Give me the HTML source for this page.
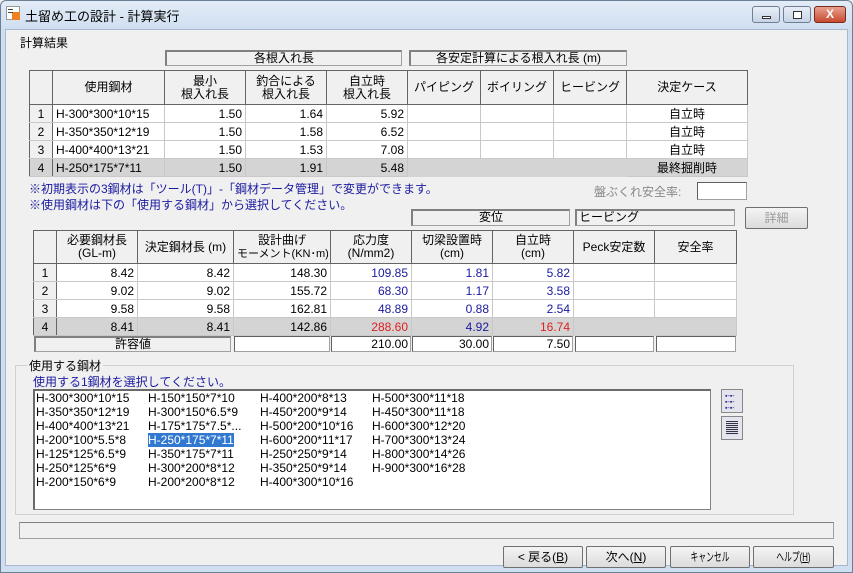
<!DOCTYPE html>
<html><head><meta charset="utf-8"><style>
*{box-sizing:border-box;margin:0;padding:0}
body{width:853px;height:573px;background:#f0f0f0;font-family:"Liberation Sans","Noto Sans CJK JP",sans-serif;font-size:12px;color:#000;position:relative;overflow:hidden}
.a{position:absolute}
.title{left:0;top:0;width:853px;height:30px;background:linear-gradient(#e3ecf7,#cfdef0);border:1px solid #6d7f95;border-bottom:none;border-radius:6px 6px 0 0}
.frame{left:0;top:28px;width:853px;height:545px;background:#cfdef0;border:1px solid #6d7f95;border-top:none}
.client{left:5px;top:29px;width:843px;height:537px;background:#f0f0f0;border:1px solid #a8b8cc}
table{border-collapse:collapse;table-layout:fixed;position:absolute}
td{border:1px solid #c8c8c8;height:18px;padding:0 3px;white-space:nowrap;overflow:hidden;line-height:16px}
tr.h td{border:1px solid #646464;background:#f0f0f0;text-align:center;line-height:13px}
td.n{background:#f0f0f0;border-left:1px solid #646464;border-right:1px solid #646464;text-align:center}
td.r{text-align:right}
td.c{text-align:center}
tr.g td{background:#d4d4d4}
.b{color:#1a1aa0}.red{color:#e02020}
.box{position:absolute;border:1px solid #a0a0a0;border-top:2px solid #808080;border-left:2px solid #808080;background:#f0f0f0;text-align:center;line-height:13px}
.btn{position:absolute;border:1px solid #707070;background:linear-gradient(#f4f4f4,#dcdcdc);border-radius:2px;text-align:center;line-height:20px;height:22px}
.in{position:absolute;background:#fff;border:1px solid #a0a0a0;border-top:1px solid #606060;border-left:1px solid #606060;text-align:right;padding-right:2px;line-height:14px}
.li{position:absolute;font-size:12px;line-height:14px}
.nx{display:inline-block;transform:scaleX(.65)}
</style></head><body>
<div class="a frame"></div>
<div class="a title"></div>
<div class="a" style="left:6px;top:6px;width:14px;height:14px;background:#fff;border:1px solid #999"><div class="a" style="left:5px;top:5px;width:8px;height:8px;background:#f08020"></div><div class="a" style="left:1px;top:2px;width:5px;height:1px;background:#444;box-shadow:0 3px #444"></div></div>
<div class="a" style="left:25px;top:6px;font-size:13px">土留め工の設計 - 計算実行</div>
<div class="a" style="left:752px;top:6px;width:28px;height:17px;border:1px solid #707e90;border-radius:3px;background:linear-gradient(#e8eff8,#c6d4e6)"><div class="a" style="left:9px;top:9px;width:9px;height:3px;border:1px solid #333;background:#fff"></div></div>
<div class="a" style="left:783px;top:6px;width:28px;height:17px;border:1px solid #707e90;border-radius:3px;background:linear-gradient(#e8eff8,#c6d4e6)"><div class="a" style="left:9px;top:4px;width:9px;height:8px;border:1px solid #333;background:#fff"></div></div>
<div class="a" style="left:814px;top:6px;width:32px;height:17px;border:1px solid #7a2a1a;border-radius:3px;background:linear-gradient(#e8a090,#c84a30);color:#fff;font-weight:bold;text-align:center;line-height:15px">X</div>
<div class="a client"></div>
<div class="a" style="left:20px;top:34px">計算結果</div>
<div class="box" style="left:165px;top:50px;width:237px;height:16px">各根入れ長</div>
<div class="box" style="left:409px;top:50px;width:218px;height:16px">各安定計算による根入れ長 (m)</div>
<table style="left:29px;top:70px;width:718px;border:1px solid #646464;background:#fff">
<colgroup><col style="width:23px"><col style="width:112px"><col style="width:81px"><col style="width:81px"><col style="width:81px"><col style="width:73px"><col style="width:73px"><col style="width:73px"><col style="width:121px"></colgroup>
<tr class="h" style="height:34px"><td></td><td>使用鋼材</td><td>最小<br>根入れ長</td><td>釣合による<br>根入れ長</td><td>自立時<br>根入れ長</td><td>パイピング</td><td>ボイリング</td><td>ヒービング</td><td>決定ケース</td></tr>
<tr><td class="n">1</td><td>H-300*300*10*15</td><td class="r">1.50</td><td class="r">1.64</td><td class="r">5.92</td><td></td><td></td><td></td><td class="c">自立時</td></tr>
<tr><td class="n">2</td><td>H-350*350*12*19</td><td class="r">1.50</td><td class="r">1.58</td><td class="r">6.52</td><td></td><td></td><td></td><td class="c">自立時</td></tr>
<tr><td class="n">3</td><td>H-400*400*13*21</td><td class="r">1.50</td><td class="r">1.53</td><td class="r">7.08</td><td></td><td></td><td></td><td class="c">自立時</td></tr>
<tr class="g"><td class="n">4</td><td>H-250*175*7*11</td><td class="r">1.50</td><td class="r">1.91</td><td class="r">5.48</td><td style="border-color:#d4d4d4"></td><td style="border-color:#d4d4d4"></td><td style="border-color:#d4d4d4"></td><td class="c">最終掘削時</td></tr>
</table>
<div class="a b" style="left:29px;top:180px">※初期表示の3鋼材は「ツール(T)」-「鋼材データ管理」で変更ができます。</div>
<div class="a b" style="left:29px;top:196px">※使用鋼材は下の「使用する鋼材」から選択してください。</div>
<div class="a" style="left:594px;top:183px;color:#888">盤ぶくれ安全率:</div>
<div class="in" style="left:697px;top:182px;width:50px;height:18px"></div>
<div class="box" style="left:411px;top:209px;width:159px;height:17px">変位</div>
<div class="box" style="left:575px;top:209px;width:160px;height:17px;text-align:left;padding-left:2px">ヒービング</div>
<div class="btn" style="left:745px;top:207px;width:63px;color:#999">詳細</div>
<table style="left:33px;top:230px;width:703px;border:1px solid #646464;background:#fff">
<colgroup><col style="width:23px"><col style="width:81px"><col style="width:96px"><col style="width:97px"><col style="width:81px"><col style="width:81px"><col style="width:81px"><col style="width:81px"><col style="width:82px"></colgroup>
<tr class="h" style="height:33px"><td></td><td>必要鋼材長<br>(GL-m)</td><td>決定鋼材長 (m)</td><td>設計曲げ<br><span style="font-size:11px">モーメント(KN･m)</span></td><td>応力度<br>(N/mm2)</td><td>切梁設置時<br>(cm)</td><td>自立時<br>(cm)</td><td>Peck安定数</td><td>安全率</td></tr>
<tr><td class="n">1</td><td class="r">8.42</td><td class="r">8.42</td><td class="r">148.30</td><td class="r b">109.85</td><td class="r b">1.81</td><td class="r b">5.82</td><td></td><td></td></tr>
<tr><td class="n">2</td><td class="r">9.02</td><td class="r">9.02</td><td class="r">155.72</td><td class="r b">68.30</td><td class="r b">1.17</td><td class="r b">3.58</td><td></td><td></td></tr>
<tr><td class="n">3</td><td class="r">9.58</td><td class="r">9.58</td><td class="r">162.81</td><td class="r b">48.89</td><td class="r b">0.88</td><td class="r b">2.54</td><td></td><td></td></tr>
<tr class="g"><td class="n">4</td><td class="r">8.41</td><td class="r">8.41</td><td class="r">142.86</td><td class="r red">288.60</td><td class="r b">4.92</td><td class="r red">16.74</td><td style="border-color:#d4d4d4"></td><td></td></tr>
</table>
<div class="box" style="left:34px;top:336px;width:197px;height:16px">許容値</div>
<div class="in" style="left:234px;top:336px;width:96px;height:16px"></div>
<div class="in" style="left:331px;top:336px;width:80px;height:16px">210.00</div>
<div class="in" style="left:412px;top:336px;width:80px;height:16px">30.00</div>
<div class="in" style="left:493px;top:336px;width:80px;height:16px">7.50</div>
<div class="in" style="left:575px;top:336px;width:79px;height:16px"></div>
<div class="in" style="left:656px;top:336px;width:80px;height:16px"></div>
<div class="a" style="left:15px;top:365px;width:779px;height:150px;border:1px solid #d0d0d0"></div>
<div class="a" style="left:27px;top:357px;background:#f0f0f0;padding:0 2px">使用する鋼材</div>
<div class="a b" style="left:33px;top:373px">使用する1鋼材を選択してください。</div>
<div class="a" style="left:33px;top:389px;width:678px;height:121px;background:#fff;border:1px solid #828282;border-top:2px solid #6a6a6a;border-left:2px solid #6a6a6a"></div>
<div class="li" style="left:36px;top:391px">H-300*300*10*15<br>H-350*350*12*19<br>H-400*400*13*21<br>H-200*100*5.5*8<br>H-125*125*6.5*9<br>H-250*125*6*9<br>H-200*150*6*9</div>
<div class="li" style="left:148px;top:391px">H-150*150*7*10<br>H-300*150*6.5*9<br>H-175*175*7.5*...<br><span style="background:#3078d0;color:#fff;outline:1px dotted #fff">H-250*175*7*11</span><br>H-350*175*7*11<br>H-300*200*8*12<br>H-200*200*8*12</div>
<div class="li" style="left:260px;top:391px">H-400*200*8*13<br>H-450*200*9*14<br>H-500*200*10*16<br>H-600*200*11*17<br>H-250*250*9*14<br>H-350*250*9*14<br>H-400*300*10*16</div>
<div class="li" style="left:372px;top:391px">H-500*300*11*18<br>H-450*300*11*18<br>H-600*300*12*20<br>H-700*300*13*24<br>H-800*300*14*26<br>H-900*300*16*28</div>
<div class="a" style="left:721px;top:389px;width:22px;height:24px;border:1px solid #888;background:#e4e4ec;color:#2a2a90;font-size:7px;line-height:6px;padding:4px 0 0 3px">▪-▪-<br>▪-▪-<br>▪-▪-</div>
<div class="a" style="left:721px;top:416px;width:22px;height:24px;border:1px solid #888;background:#e4e4ec"><div class="a" style="left:4px;top:4px;width:12px;height:14px;background:repeating-linear-gradient(#334 0 1px,#dde 1px 2px)"></div></div>
<div class="a" style="left:19px;top:522px;width:815px;height:17px;border:1px solid #a0a0a0;border-top:1px solid #808080"></div>
<div class="btn" style="left:503px;top:546px;width:80px">&lt; 戻る(<u>B</u>)</div>
<div class="btn" style="left:586px;top:546px;width:80px">次へ(<u>N</u>)</div>
<div class="btn" style="left:670px;top:546px;width:80px"><span class="nx">キャンセル</span></div>
<div class="btn" style="left:753px;top:546px;width:81px"><span class="nx">ヘルプ(<u>H</u>)</span></div>
</body></html>
